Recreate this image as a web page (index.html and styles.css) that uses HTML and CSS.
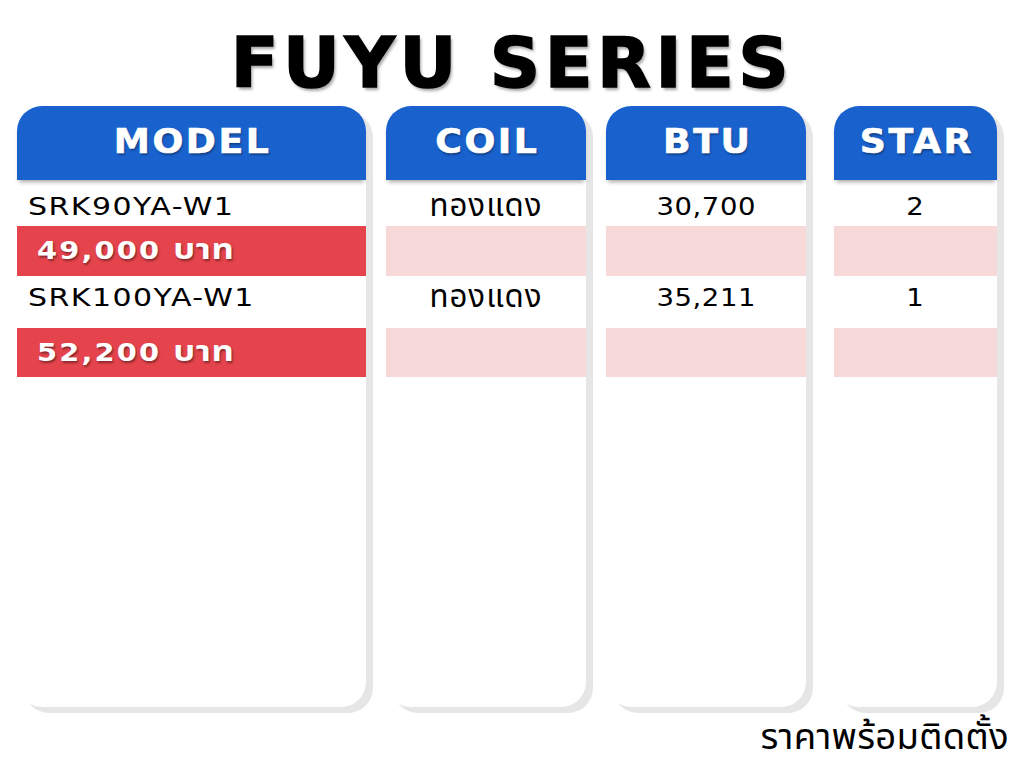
FILE: index.html
```html
<!DOCTYPE html>
<html lang="th">
<head>
<meta charset="utf-8">
<title>FUYU SERIES</title>
<link rel="stylesheet" href="styles.css">
</head>
<body>
<div class="page">
  <h1 class="title">FUYU SERIES</h1>
  <div class="table">
    <div class="col col-model">
      <div class="head"><span class="wide">MODEL</span></div>
      <div class="cell r1 model"><span class="wide left">SRK90YA-W1</span></div>
      <div class="cell r2 price"><span class="wide left">49,000 <span class="th">บาท</span></span></div>
      <div class="cell r3 model"><span class="wide left">SRK100YA-W1</span></div>
      <div class="cell r4 price"><span class="wide left">52,200 <span class="th">บาท</span></span></div>
    </div>
    <div class="col col-coil">
      <div class="head"><span class="wide">COIL</span></div>
      <div class="cell r1 center"><span class="th">ทองแดง</span></div>
      <div class="cell r2 pink"></div>
      <div class="cell r3 center"><span class="th">ทองแดง</span></div>
      <div class="cell r4 pink"></div>
    </div>
    <div class="col col-btu">
      <div class="head"><span class="wide">BTU</span></div>
      <div class="cell r1 center"><span class="wide">30,700</span></div>
      <div class="cell r2 pink"></div>
      <div class="cell r3 center"><span class="wide">35,211</span></div>
      <div class="cell r4 pink"></div>
    </div>
    <div class="col col-star">
      <div class="head"><span class="wide">STAR</span></div>
      <div class="cell r1 center"><span class="wide">2</span></div>
      <div class="cell r2 pink"></div>
      <div class="cell r3 center"><span class="wide">1</span></div>
      <div class="cell r4 pink"></div>
    </div>
  </div>
  <div class="note">ราคาพร้อมติดตั้ง</div>
</div>
</body>
</html>
```

FILE: styles.css
```css
html, body {
  margin: 0;
  padding: 0;
  background: #ffffff;
}
.page {
  width: 1024px;
  height: 768px;
  padding-top: 28px;
  box-sizing: border-box;
  font-family: "DejaVu Sans", "Noto Sans Thai", "Noto Sans Thai UI", "Noto Sans", sans-serif;
  color: #000;
}
.title {
  margin: 0 0 8px 0;
  font-size: 70px;
  line-height: 70px;
  font-weight: bold;
  text-align: center;
  letter-spacing: 4.5px;
  -webkit-text-stroke: 1.5px #000;
  text-shadow: 2px 3px 3px rgba(0,0,0,0.35);
}
.table {
  display: flex;
  padding-left: 17px;
  height: 601px;
}
.col {
  display: flex;
  flex-direction: column;
  background: #fff;
  border-radius: 25px;
  box-shadow: 7px 6px 0 #e6e6e6;
}
.col-model { width: 349px; margin-right: 20px; }
.col-coil { width: 200px; margin-right: 20px; }
.col-btu { width: 200px; margin-right: 28px; }
.col-star { width: 163px; }
.wide {
  display: inline-block;
  transform: scaleX(1.1);
  transform-origin: center;
}
.wide.left {
  transform-origin: left center;
}
.head {
  height: 74px;
  background: #1961cd;
  border-radius: 25px 25px 0 0;
  color: #fff;
  font-weight: bold;
  font-size: 33px;
  letter-spacing: 2.3px;
  -webkit-text-stroke: 0.6px #fff;
  display: flex;
  align-items: center;
  justify-content: center;
  padding-bottom: 3px;
  padding-left: 3px;
  box-sizing: border-box;
  text-shadow: 1px 2px 2px rgba(0,0,0,0.35);
  box-shadow: 0 4px 4px -2px rgba(0,0,0,0.35);
  position: relative;
  z-index: 1;
}
.cell {
  display: flex;
  align-items: center;
  font-size: 25px;
  box-sizing: border-box;
  white-space: pre;
}
.r1 { height: 46px; padding-top: 6px; }
.r2 { height: 50px; }
.r3 { height: 52px; padding-bottom: 10px; }
.r4 { height: 49px; }
.model {
  padding-left: 11px;
  letter-spacing: 1.2px;
}
.model .wide {
  transform: scaleX(1.2);
}
.center {
  justify-content: center;
  letter-spacing: 0.5px;
}
.th {
  font-size: 1.25em;
  letter-spacing: 1px;
}
.price .th {
  font-size: 1.2em;
  letter-spacing: 0.5px;
}
.price {
  background: #e5444c;
  color: #fff;
  font-weight: bold;
  font-size: 24px;
  letter-spacing: 1.8px;
  padding-left: 20px;
  padding-bottom: 2px;
  text-shadow: 1px 2px 2px rgba(0,0,0,0.4);
}
.price .wide {
  transform: scaleX(1.2);
}
.pink {
  background: #f7d9da;
}
.note {
  margin-top: 12px;
  text-align: right;
  padding-right: 15px;
  font-size: 36.5px;
  line-height: 36px;
  letter-spacing: 0.3px;
}
```
